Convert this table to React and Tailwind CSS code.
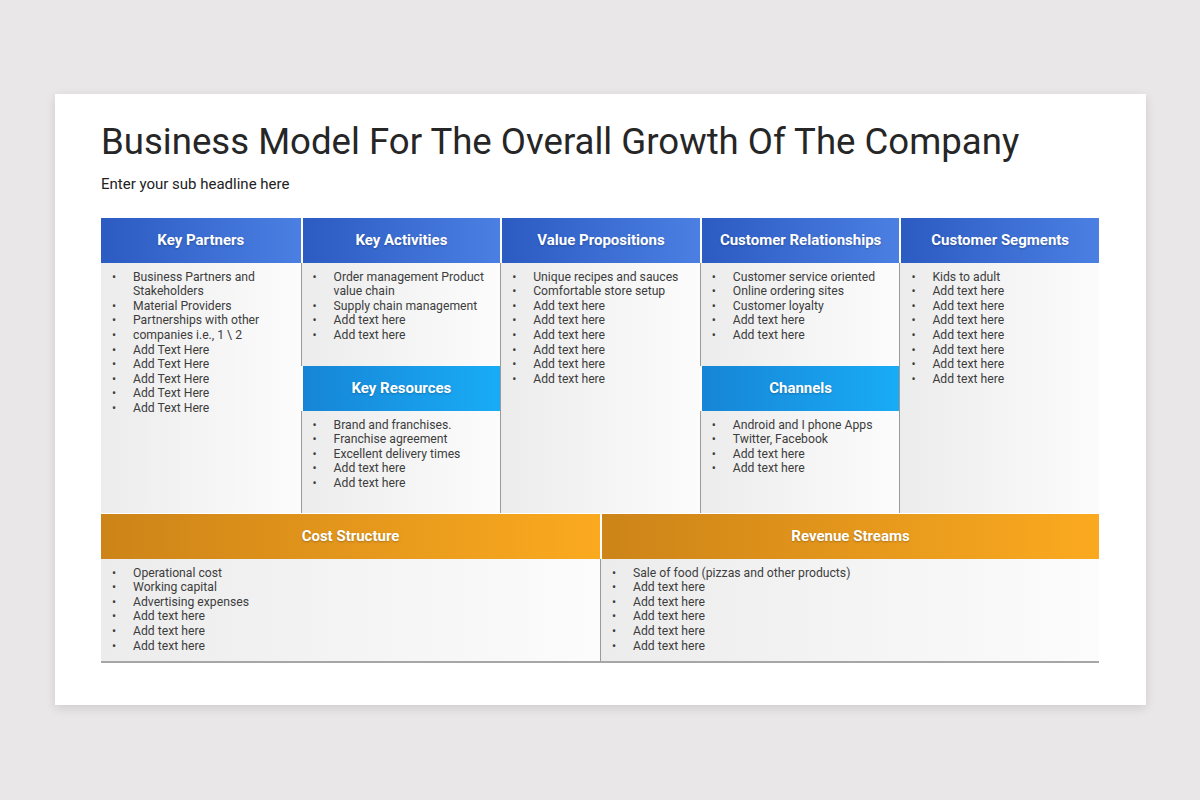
import React from 'react'

const font = { fontFamily: 'Roboto, "Liberation Sans", Arial, sans-serif' }

function Header({ title, tone = 'blue', className = '' }) {
  const tones = {
    blue: 'bg-linear-to-r from-[#2c5bc2] to-[#4b7fe2]',
    sky: 'bg-linear-to-r from-[#1785d6] to-[#19acf6]',
    orange: 'bg-linear-to-r from-[#cd8418] to-[#fbaa1f]',
  }
  return (
    <div
      className={`h-[45px] flex items-center justify-center text-white font-bold text-[15px] ${tones[tone]} ${className}`}
      style={{ textShadow: '0 1px 2px rgba(0,0,0,0.25)' }}
    >
      {title}
    </div>
  )
}

function Items({ items, className = '' }) {
  return (
    <ul className={`pl-[11px] pr-[10px] pt-[7px] text-[12.2px] leading-[14.6px] text-[#3d3d3d] bg-linear-to-r from-[#ececec] to-[#fcfcfc] ${className}`}>
      {items.map((t, i) => (
        <li key={i} className="flex">
          <span className="w-[21px] shrink-0">•</span>
          <span>{t}</span>
        </li>
      ))}
    </ul>
  )
}

const addLower = (n) => Array(n).fill('Add text here')

export default function App() {
  return (
    <div className="min-h-[800px] w-full bg-[#e9e7e8] pt-[94px] pl-[55px]" style={font}>
      <div className="w-[1091px] h-[611px] bg-white shadow-[0_3px_10px_rgba(0,0,0,0.12)] pt-[30px] px-[46px]">
        <h1 className="text-[36.6px] leading-none text-[#262626]">
          Business Model For The Overall Growth Of The Company
        </h1>
        <p className="mt-[16px] text-[15px] leading-none text-[#222]">Enter your sub headline here</p>

        <div className="mt-[26px] w-[998px]">
          <div className="grid grid-cols-5 h-[295px]">
            {/* Key Partners */}
            <div className="flex flex-col">
              <Header title="Key Partners" />
              <Items
                className="flex-1"
                items={[
                  'Business Partners and Stakeholders',
                  'Material Providers',
                  'Partnerships with other',
                  'companies i.e., 1 \\ 2',
                  'Add Text Here',
                  'Add Text Here',
                  'Add Text Here',
                  'Add Text Here',
                  'Add Text Here',
                ]}
              />
            </div>

            {/* Key Activities / Key Resources */}
            <div className="flex flex-col">
              <Header title="Key Activities" className="border-l-2 border-white" />
              <Items
                className="h-[103px] pl-[10px] border-l border-[#9a9a9a]"
                items={['Order management Product value chain', 'Supply chain management', ...addLower(2)]}
              />
              <Header title="Key Resources" tone="sky" className="border-l-2 border-white" />
              <Items
                className="flex-1 pl-[10px] border-l border-[#9a9a9a]"
                items={['Brand and franchises.', 'Franchise agreement', 'Excellent delivery times', ...addLower(2)]}
              />
            </div>

            {/* Value Propositions */}
            <div className="flex flex-col">
              <Header title="Value Propositions" className="border-l-2 border-white" />
              <Items
                className="flex-1 pl-[10px] border-l border-[#9a9a9a]"
                items={['Unique recipes and sauces', 'Comfortable store setup', ...addLower(6)]}
              />
            </div>

            {/* Customer Relationships / Channels */}
            <div className="flex flex-col">
              <Header title="Customer Relationships" className="border-l-2 border-white" />
              <Items
                className="h-[103px] pl-[10px] border-l border-[#9a9a9a]"
                items={['Customer service oriented', 'Online ordering sites', 'Customer loyalty', ...addLower(2)]}
              />
              <Header title="Channels" tone="sky" className="border-l-2 border-white" />
              <Items
                className="flex-1 pl-[10px] border-l border-[#9a9a9a]"
                items={['Android and I phone Apps', 'Twitter, Facebook', ...addLower(2)]}
              />
            </div>

            {/* Customer Segments */}
            <div className="flex flex-col">
              <Header title="Customer Segments" className="border-l-2 border-white" />
              <Items
                className="flex-1 pl-[10px] border-l border-[#9a9a9a]"
                items={['Kids to adult', ...addLower(7)]}
              />
            </div>
          </div>

          <div className="grid grid-cols-2 mt-px border-b-2 border-[#a6a6a6]">
            <div className="flex flex-col">
              <Header title="Cost Structure" tone="orange" className="h-[44px]" />
              <Items
                className="h-[102px] pt-[6px]"
                items={['Operational cost', 'Working capital', 'Advertising expenses', ...addLower(3)]}
              />
            </div>
            <div className="flex flex-col">
              <Header title="Revenue Streams" tone="orange" className="h-[44px] border-l-2 border-white" />
              <Items
                className="h-[102px] pt-[6px] pl-[10px] border-l border-[#9a9a9a]"
                items={['Sale of food (pizzas and other products)', ...addLower(5)]}
              />
            </div>
          </div>
        </div>
      </div>
    </div>
  )
}
